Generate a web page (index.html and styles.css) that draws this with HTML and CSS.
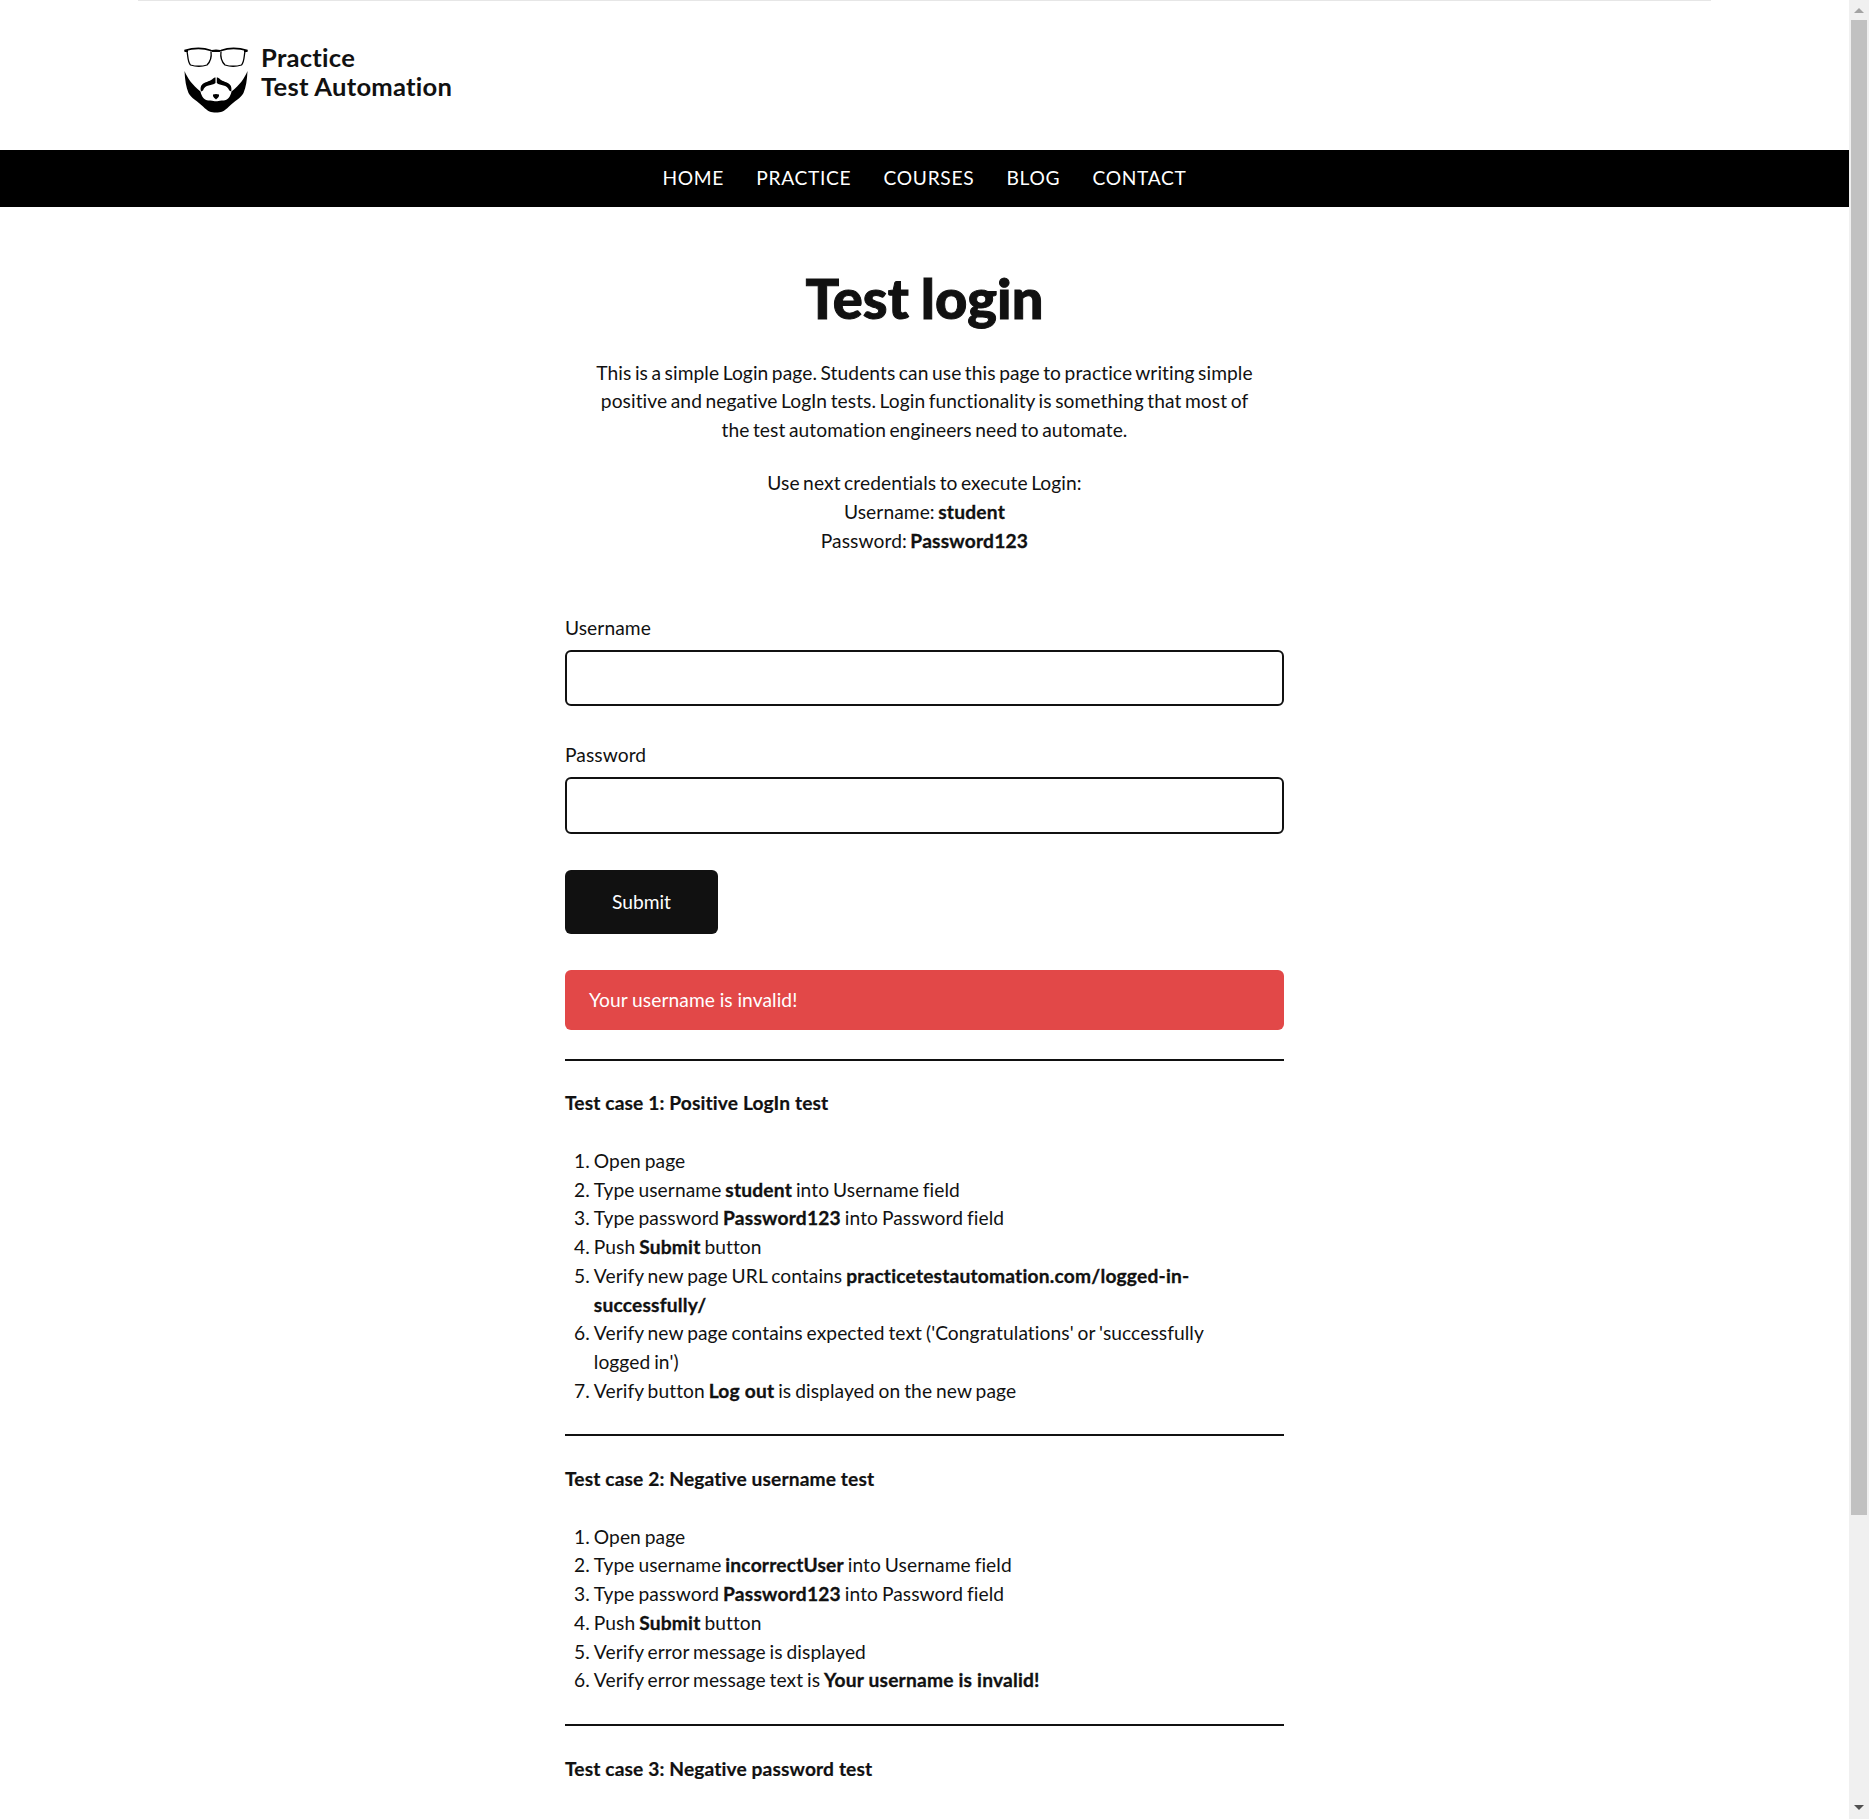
FILE: index.html
```html
<!DOCTYPE html>
<html lang="en">
<head>
<meta charset="utf-8">
<title>Test Login | Practice Test Automation</title>
<link rel="stylesheet" href="styles.css">
</head>
<body>
<div class="window">
  <div class="page">
    <header class="header">
      <div class="brand">
        <svg class="logo" viewBox="0 0 66 68" width="66" height="68" aria-hidden="true">
          <g fill="none" stroke="#000">
            <path stroke-width="1.3" d="M4 4.500C5 8 4.500 15 7.500 18Q16 20.500 24 18C28 14 28.500 8 28 4.500M38 4.500C37.500 8 38 14 42 18Q50 20.500 58.500 18C61.500 15 61 8 62 4.500"/>
            <path stroke-width="1.7" d="M1.500 3.500Q16 -.9 28 3.500Q33 5 38 3.500Q50 -.9 64.500 3.500"/>
            <path stroke-width="2.200" d="M1.500 4H5M61 4H64.500M29 4Q33 3.400 37 4"/>
          </g>
          <path d="M1.500 24C5 32 9 37.500 17.500 44.500C18.500 50 22 54 26 53.500C29 53 31 54.200 33 54.200S37 53 40 53.500C44 54 47.500 50 48.500 44.500C57 37.500 61 32 64.500 24C64 33 63 40 60.500 46C58 51 51 54.500 46 59.500C41 64.500 38 65.600 33 65.600S25 64.500 20 59.500C15 54.500 8 51 5.500 46C3 40 2 33 1.500 24Z"/>
          <path d="M32.500 30.500V36C29 39 22 37 20 43.500L18 44.500C16 35 24 36 29 32.500C30.500 31 31.500 30.500 32.500 30.500ZM33.800 30.500V36C37.300 39 44 37 46.300 43.500L48.300 44.500C50 35 42 36 37.300 32.500C36 31 35 30.500 33.800 30.500Z"/>
          <path d="M30 47.500Q33 46.300 36 47.500C36.500 49.500 34.800 51 34 51.500L33 52.500L32 51.500C31.200 51 29.500 49.500 30 47.500Z"/>
        </svg>
        <div class="brand-name">Practice<br>Test Automation</div>
      </div>
    </header>
    <nav class="nav">
      <a>HOME</a><a>PRACTICE</a><a>COURSES</a><a>BLOG</a><a>CONTACT</a>
    </nav>
    <main class="content">
      <h1 class="title">Test login</h1>
      <div class="intro">
        <p>This is a simple Login page. Students can use this page to practice writing simple positive and negative LogIn tests. Login functionality is something that most of the test automation engineers need to automate.</p>
        <p>Use next credentials to execute Login:<br>Username: <b>student</b><br>Password: <b>Password123</b></p>
      </div>
      <form class="form">
        <label class="label" for="username">Username</label>
        <input class="input" id="username" type="text">
        <label class="label" for="password">Password</label>
        <input class="input input-password" id="password" type="password">
        <button class="submit" type="button">Submit</button>
      </form>
      <div class="error">Your username is invalid!</div>
      <section class="case">
        <h5>Test case 1: Positive LogIn test</h5>
        <ol>
          <li>Open page</li>
          <li>Type username <b>student</b> into Username field</li>
          <li>Type password <b>Password123</b> into Password field</li>
          <li>Push <b>Submit</b> button</li>
          <li>Verify new page URL contains <b>practicetestautomation.com/logged-in-<br>successfully/</b></li>
          <li>Verify new page contains expected text ('Congratulations' or 'successfully logged in')</li>
          <li>Verify button <b>Log out</b> is displayed on the new page</li>
        </ol>
      </section>
      <section class="case">
        <h5>Test case 2: Negative username test</h5>
        <ol>
          <li>Open page</li>
          <li>Type username <b>incorrectUser</b> into Username field</li>
          <li>Type password <b>Password123</b> into Password field</li>
          <li>Push <b>Submit</b> button</li>
          <li>Verify error message is displayed</li>
          <li>Verify error message text is <b>Your username is invalid!</b></li>
        </ol>
      </section>
      <section class="case">
        <h5>Test case 3: Negative password test</h5>
      </section>
    </main>
  </div>
  <div class="scrollbar">
    <svg width="10" height="5" viewBox="0 0 10 5"><path fill="#a3a3a3" d="M5 0L10 5H0Z"/></svg>
    <div class="thumb"></div>
    <svg width="10" height="5" viewBox="0 0 10 5"><path fill="#505050" d="M0 0H10L5 5Z"/></svg>
  </div>
</div>
</body>
</html>
```
FILE: styles.css
```css
* { box-sizing: border-box; }
body {
  margin: 0;
  background: #fff;
  color: #111;
  font: 400 19.2px/28.8px Lato, sans-serif;
  letter-spacing: 0.08px;
  word-spacing: -1.5px;
}
.window { display: flex; height: 1819px; overflow: hidden; }
.page { flex: 1; min-width: 0; }
.header {
  height: 150px;
  width: 1573px;
  margin: 0 auto;
  border-top: 1px solid #e6e6e6;
  padding: 46px 0 0 45px;
}
.brand { display: flex; gap: 12px; }
.logo { display: block; }
.brand-name {
  font-size: 25.6px;
  font-weight: 700;
  line-height: 29px;
  margin-top: -4.5px;
  letter-spacing: 0.25px;
  word-spacing: 0;
}
.nav {
  height: 57px;
  background: #000;
  color: #fff;
  display: flex;
  justify-content: center;
  gap: 32.3px;
  padding-top: 14px;
  letter-spacing: 0.67px;
}
.content { width: 719px; margin: 0 auto; padding-top: 56px; }
.title {
  margin: 0 0 25.7px;
  font-size: 56px;
  line-height: 70px;
  font-weight: 900;
  text-align: center;
  -webkit-text-stroke: 1px #111;
}
.intro { padding: 0 28.8px; text-align: center; }
.intro p { margin: 0 0 24px; }
.intro p:last-child { margin: 0 0 58.8px; }
.form { display: flex; flex-direction: column; align-items: flex-start; }
.label { display: block; margin-bottom: 6.9px; }
.input {
  width: 100%;
  height: 56px;
  margin: 0 0 35.3px;
  border: 2px solid #111;
  border-radius: 6px;
  background: #fff;
  font: inherit;
}
.input-password { height: 57px; margin-bottom: 36px; }
.submit {
  width: 153px;
  height: 64px;
  border: 0;
  border-radius: 6px;
  background: #111;
  color: #fff;
  font: inherit;
}
.error {
  height: 60px;
  margin: 36px 0 28.6px;
  padding: 16px 24px;
  border-radius: 6px;
  background: #e24848;
  color: #fff;
  word-spacing: -0.3px;
}
.case { border-top: 2px solid #111; padding: 28.75px 0; line-height: 28.75px; }
.case h5 {
  margin: 0;
  font-size: inherit;
  font-weight: 700;
  letter-spacing: 0.12px;
  word-spacing: 0;
  -webkit-text-stroke: 0.2px #111;
}
.case b, .intro b {
  font-weight: 700;
  letter-spacing: 0.2px;
  word-spacing: 0;
  -webkit-text-stroke: 0.3px #111;
}
.case ol { margin: 28.75px 0 0; padding: 0 28.8px; word-spacing: -1.1px; }
.scrollbar {
  width: 20px;
  background: #f0f0f0;
  display: flex;
  flex-direction: column;
  align-items: center;
  justify-content: space-between;
  padding: 8px 1px 9px 0;
}
.thumb { width: 16px; height: 1495px; background: #c1c1c1; margin: 7px 0 auto; }
```
